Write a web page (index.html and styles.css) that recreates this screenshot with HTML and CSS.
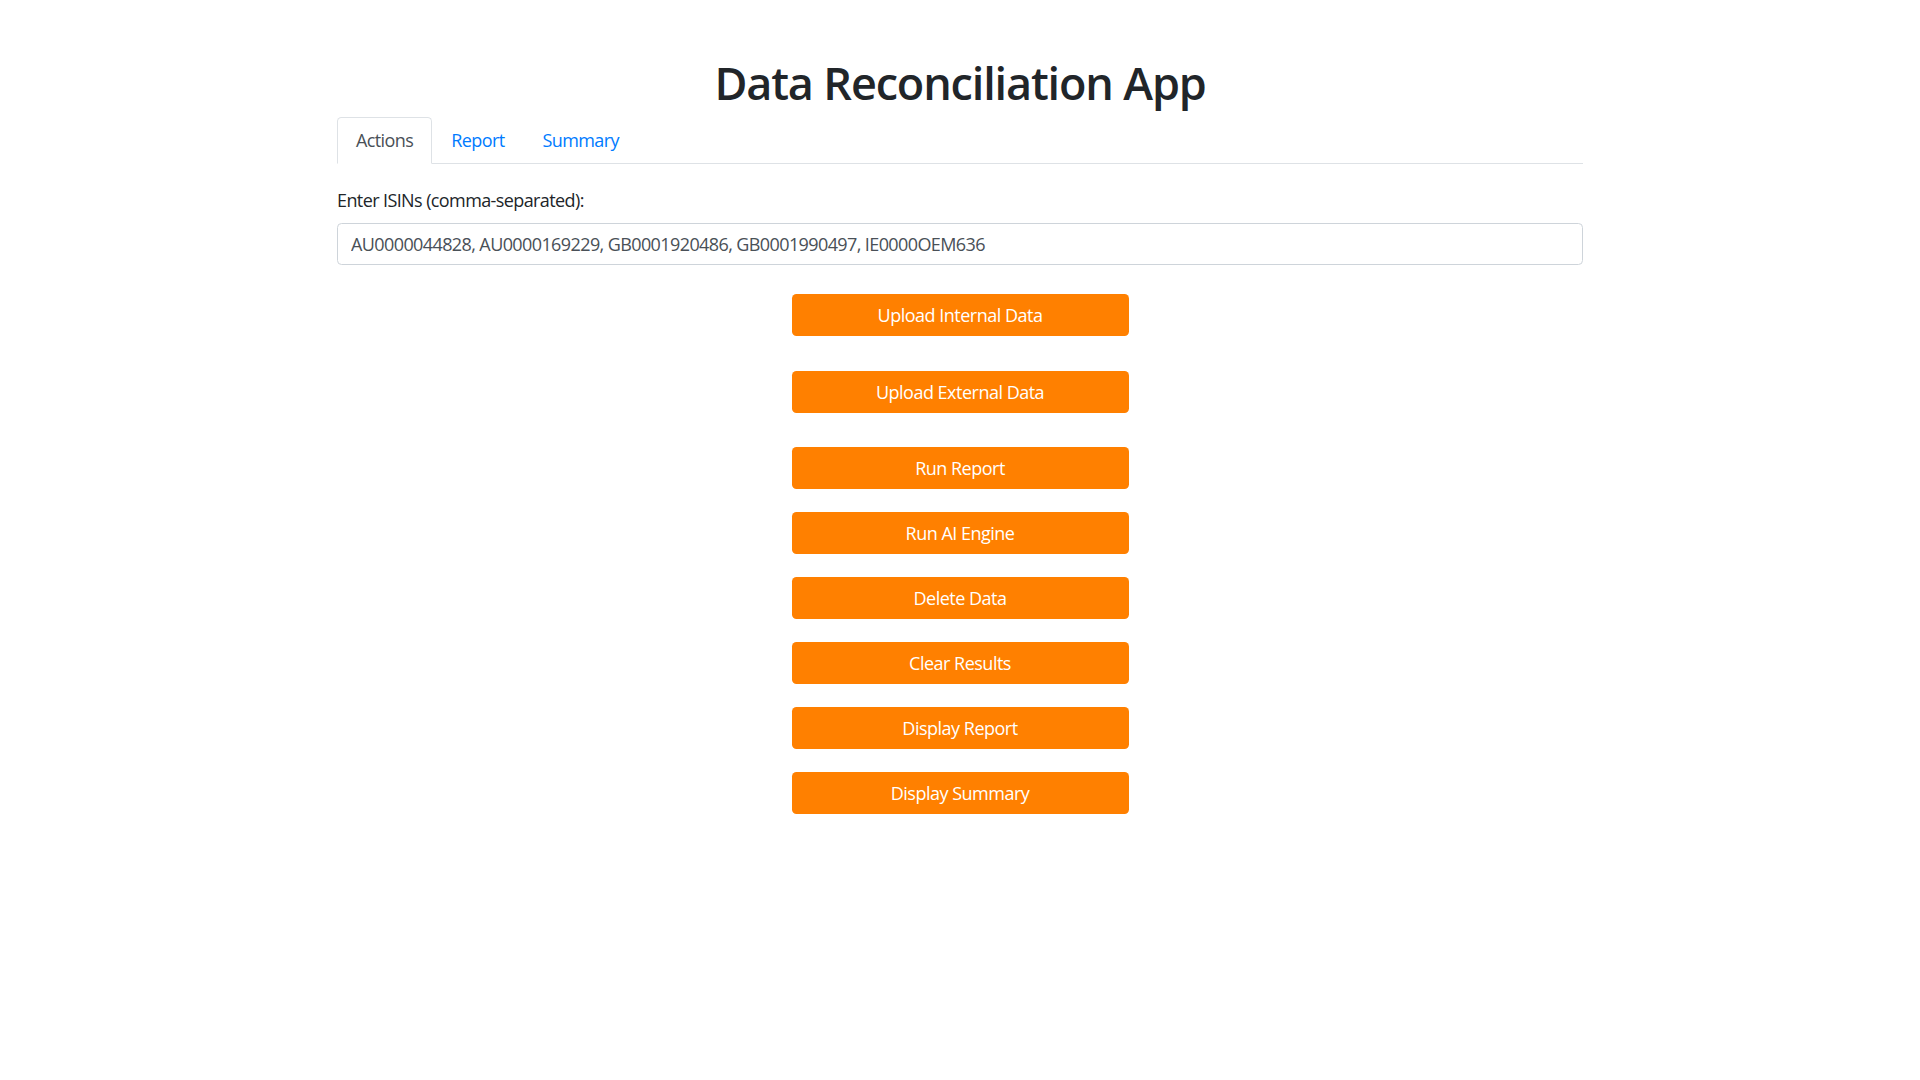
FILE: index.html
```html
<!DOCTYPE html>
<html lang="en">
<head>
<meta charset="utf-8">
<title>Data Reconciliation App</title>
<link rel="stylesheet" href="styles.css">
</head>
<body>
<div class="container">
  <h1 class="title">Data Reconciliation App</h1>
  <ul class="tabs">
    <li class="tab active">Actions</li>
    <li class="tab">Report</li>
    <li class="tab">Summary</li>
  </ul>
  <div class="panel">
    <label class="label" for="isins">Enter ISINs (comma-separated):</label>
    <input id="isins" class="input" type="text" value="AU0000044828, AU0000169229, GB0001920486, GB0001990497, IE0000OEM636">
    <div class="actions">
      <div class="group group-wide">
        <button class="btn">Upload Internal Data</button>
        <button class="btn">Upload External Data</button>
      </div>
      <div class="group">
        <button class="btn">Run Report</button>
        <button class="btn">Run AI Engine</button>
        <button class="btn">Delete Data</button>
        <button class="btn">Clear Results</button>
        <button class="btn">Display Report</button>
        <button class="btn">Display Summary</button>
      </div>
    </div>
  </div>
</div>
</body>
</html>
```

FILE: styles.css
```css
* { box-sizing: border-box; }
html, body { margin: 0; padding: 0; background: #fff; }
body {
  font-family: "Open Sans", "Noto Sans", sans-serif;
  font-size: 18px;
  line-height: 1.5;
  color: #212529;
}
.container {
  width: 1246px;
  margin: 0 auto;
}
.title {
  margin: 0;
  padding-top: 56px;
  margin-bottom: 7px;
  font-size: 45px;
  font-weight: 600;
  line-height: 1.2;
  text-align: center;
  letter-spacing: -1.15px;
}
.tabs {
  list-style: none;
  margin: 0;
  padding: 0;
  display: flex;
  border-bottom: 1px solid #dee2e6;
}
.tab {
  padding: 9px 18px;
  margin-bottom: -1px;
  border: 1px solid transparent;
  border-top-left-radius: 4.5px;
  border-top-right-radius: 4.5px;
  color: #007bff;
  letter-spacing: -0.6px;
}
.tab.active {
  color: #495057;
  border-color: #dee2e6 #dee2e6 #fff;
  background: #fff;
}
.panel {
  padding-top: 23px;
}
.label {
  display: block;
  margin-bottom: 9px;
  letter-spacing: -0.6px;
}
.input {
  display: block;
  width: 100%;
  height: 42px;
  padding: 6px 13px;
  font-family: inherit;
  font-size: 18px;
  color: #495057;
  border: 1px solid #ced4da;
  border-radius: 4.5px;
  letter-spacing: -0.6px;
}
.actions {
  display: flex;
  flex-direction: column;
  align-items: center;
  padding-top: 29px;
  gap: 34px;
}
.group {
  display: flex;
  flex-direction: column;
  gap: 23px;
}
.group-wide { gap: 35px; }
.btn {
  width: 337px;
  height: 42px;
  background: #ff8000;
  color: #fff;
  border: 0;
  border-radius: 4.5px;
  font-family: inherit;
  font-size: 18px;
  letter-spacing: -0.5px;
  cursor: pointer;
}
```
